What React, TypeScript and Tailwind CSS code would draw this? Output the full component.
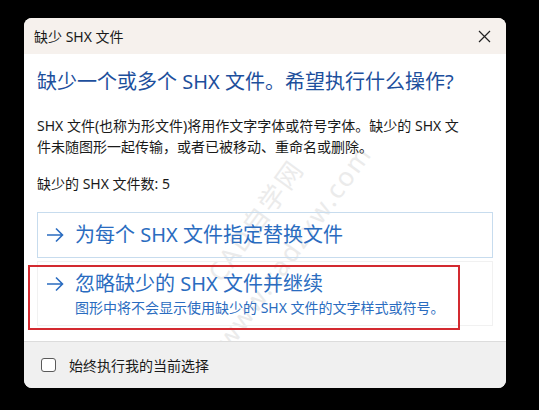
import React from 'react';

const font = { fontFamily: '"Noto Sans", "Noto Sans CJK SC", sans-serif' };

const Arrow = () => (
  <svg width="18" height="16" viewBox="0 0 18 16" fill="none" stroke="currentColor" strokeWidth="1.6">
    <path d="M1 8h15.5M10 1.5 16.5 8 10 14.5" />
  </svg>
);

export default function App() {
  return (
    <div className="min-h-screen w-full bg-black pl-[24px] pt-[18px]" style={font}>
      <div className="relative flex h-[370px] w-[482px] flex-col overflow-hidden rounded-[8px] bg-white">
        {/* watermark, behind the content */}
        <div className="pointer-events-none absolute left-[130px] top-[170px] w-[240px] -rotate-[54deg] text-center text-[26px] leading-[46px] tracking-[2px] text-[#ebebeb]">
          <div>CAD自学网</div>
          <div>www.cadzxw.com</div>
        </div>

        {/* title bar */}
        <div className="relative flex h-[36px] items-center justify-between bg-[#f6f1ed] pl-[10px] pr-[15px]">
          <span className="text-[14px] text-[#1a1a1a]">缺少 SHX 文件</span>
          <svg width="13" height="13" viewBox="0 0 13 13" stroke="#222" strokeWidth="1.2">
            <path d="M1 1l11 11M12 1 1 12" />
          </svg>
        </div>

        {/* content */}
        <div className="relative flex flex-1 flex-col px-[13px] pt-[14px]">
          <h1 className="text-[20px] leading-[28px] text-[#1d4f9c]">缺少一个或多个 SHX 文件。希望执行什么操作?</h1>
          <p className="mt-[19px] text-[14px] leading-[21px] text-[#1a1a1a]">
            SHX 文件(也称为形文件)将用作文字字体或符号字体。缺少的 SHX 文<br />
            件未随图形一起传输，或者已被移动、重命名或删除。
          </p>
          <p className="mt-[16px] text-[14px] leading-[21px] text-[#1a1a1a]">缺少的 SHX 文件数: 5</p>

          <div className="mt-[18px] flex h-[46px] items-center gap-[11px] border border-[#c7dcee] pl-[8px] text-[#2a6cc0]">
            <Arrow />
            <span className="text-[20px] leading-[28px]">为每个 SHX 文件指定替换文件</span>
          </div>

          <div className="mt-[3px] flex h-[65px] flex-col border border-[#f1f1f1] pl-[8px] pt-[8px] text-[#2a6cc0]">
            <div className="flex items-center gap-[11px]">
              <Arrow />
              <span className="text-[20px] leading-[28px]">忽略缺少的 SHX 文件并继续</span>
            </div>
            <span className="pl-[29px] text-[14px] leading-[20px]">图形中将不会显示使用缺少的 SHX 文件的文字样式或符号。</span>
          </div>
        </div>

        {/* footer */}
        <div className="relative flex h-[47px] items-center gap-[13px] border-t border-[#dcdcdc] bg-[#f0f0f0] pl-[17px]">
          <div className="h-[14px] w-[15px] rounded-[3px] border border-[#5a5a5a] bg-white" />
          <span className="text-[14px] text-[#1a1a1a]">始终执行我的当前选择</span>
        </div>

        {/* annotation */}
        <div className="pointer-events-none absolute left-[4px] top-[247px] h-[65px] w-[432px] border-2 border-[#d32a30]" />
      </div>
    </div>
  );
}
